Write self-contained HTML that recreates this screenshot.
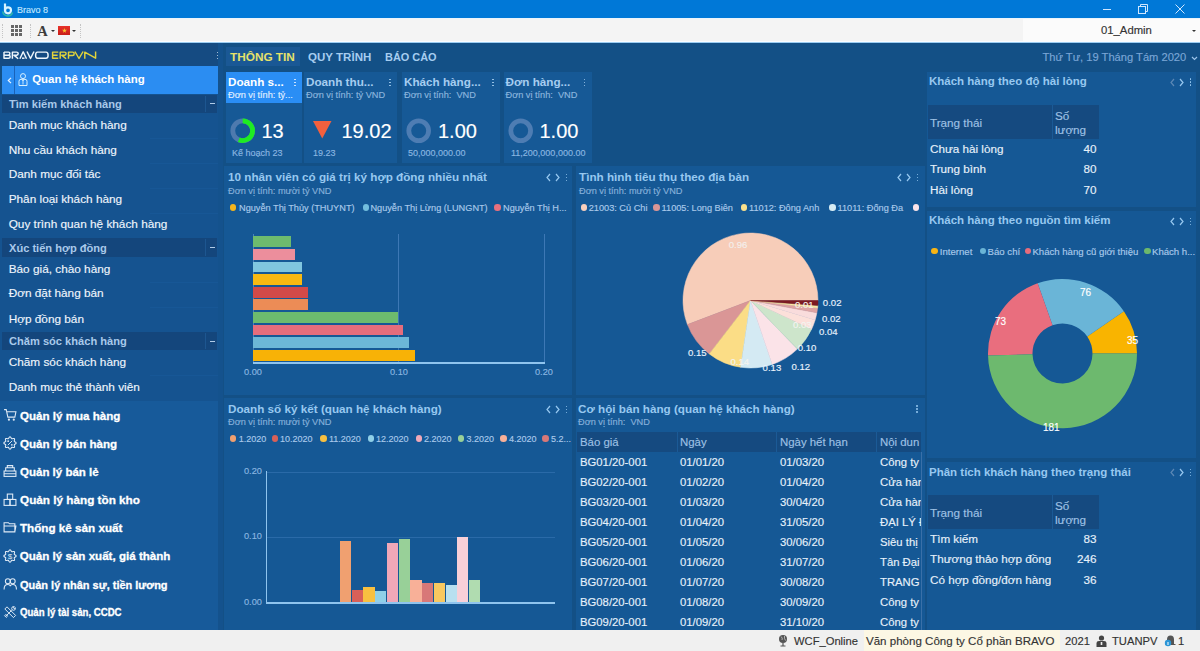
<!DOCTYPE html>
<html><head><meta charset="utf-8"><title>Bravo 8</title>
<style>
html,body{margin:0;padding:0;width:1200px;height:651px;overflow:hidden;background:#135086;}
body{position:relative;font-family:"Liberation Sans",sans-serif;}
.t{position:absolute;white-space:nowrap;line-height:1;font-family:"Liberation Sans",sans-serif;-webkit-text-stroke:0.15px currentColor;}
.r{position:absolute;}
svg.r{overflow:visible;}
</style></head><body>
<div class="r" style="left:0px;top:0px;width:1200px;height:17.5px;background:#0078d7;"></div>
<svg class="r" style="left:1px;top:2px" width="13" height="14" viewBox="0 0 13 14"><path d="M1.8 9.5 A5 5 0 0 0 11.5 10.5" fill="none" stroke="#2fb8a8" stroke-width="1.6"/><circle cx="7" cy="8.3" r="3" fill="none" stroke="#d8f4ff" stroke-width="2.2"/><path d="M4 1.5 V8.5" stroke="#d8f4ff" stroke-width="2.2"/></svg>
<div class="t" style="left:17.0px;top:4.7px;font-size:9.8px;color:#c0e6ff;font-weight:normal;transform-origin:0 0;transform:scaleX(0.918);">Bravo 8</div>
<div class="r" style="left:1102.5px;top:8.5px;width:8.5px;height:1px;background:#cfe6ff;"></div>
<svg class="r" style="left:1138px;top:4px" width="10" height="10" viewBox="0 0 10 10"><rect x="0.5" y="2.5" width="7" height="7" fill="none" stroke="#cfe6ff" stroke-width="1"/><path d="M2.5 2.5 V0.5 H9.5 V7.5 H7.5" fill="none" stroke="#cfe6ff" stroke-width="1"/></svg>
<svg class="r" style="left:1175px;top:4px" width="10" height="10" viewBox="0 0 10 10"><path d="M0.5 0.5 L9.5 9.5 M9.5 0.5 L0.5 9.5" stroke="#cfe6ff" stroke-width="1"/></svg>
<div class="r" style="left:0px;top:17.5px;width:1200px;height:25px;background:#f4f4f4;"></div>
<div class="r" style="left:0px;top:17.5px;width:1200px;height:1px;background:#eaf4fc;"></div>
<div class="r" style="left:2px;top:24px;width:0;height:14px;border-left:1px dotted #c4c4c4"></div>
<div class="r" style="left:30px;top:24px;width:0;height:14px;border-left:1px dotted #c4c4c4"></div>
<div class="r" style="left:80px;top:24px;width:0;height:14px;border-left:1px dotted #c4c4c4"></div>
<div class="r" style="left:11px;top:25px;width:3px;height:3px;background:#666666;"></div>
<div class="r" style="left:15px;top:25px;width:3px;height:3px;background:#666666;"></div>
<div class="r" style="left:19px;top:25px;width:3px;height:3px;background:#666666;"></div>
<div class="r" style="left:11px;top:29px;width:3px;height:3px;background:#666666;"></div>
<div class="r" style="left:15px;top:29px;width:3px;height:3px;background:#666666;"></div>
<div class="r" style="left:19px;top:29px;width:3px;height:3px;background:#666666;"></div>
<div class="r" style="left:11px;top:33px;width:3px;height:3px;background:#666666;"></div>
<div class="r" style="left:15px;top:33px;width:3px;height:3px;background:#666666;"></div>
<div class="r" style="left:19px;top:33px;width:3px;height:3px;background:#666666;"></div>
<div class="t" style="left:37.3px;top:23.7px;font-size:14.5px;color:#3c3c3c;font-weight:bold;-webkit-text-stroke:0;font-family:'Liberation Serif',serif;">A</div>
<div class="r" style="left:50.5px;top:29.8px;width:0;height:0;border-left:2px solid transparent;border-right:2px solid transparent;border-top:2.5px solid #333"></div>
<div class="r" style="left:58px;top:26px;width:12px;height:9px;background:linear-gradient(#e8322a,#c81e18);"></div>
<svg class="r" style="left:61.5px;top:27.5px" width="5" height="5" viewBox="0 0 10 10"><polygon points="5,0 6.2,3.6 10,3.6 6.9,5.9 8.1,9.5 5,7.3 1.9,9.5 3.1,5.9 0,3.6 3.8,3.6" fill="#f8c030"/></svg>
<div class="r" style="left:71.6px;top:29.8px;width:0;height:0;border-left:2px solid transparent;border-right:2px solid transparent;border-top:2.5px solid #333"></div>
<div class="r" style="left:1023px;top:18.5px;width:177px;height:23px;background:#fbfbfb;"></div>
<div class="t" style="left:1101.0px;top:25.4px;font-size:11.3px;color:#333333;font-weight:normal;">01_Admin</div>
<div class="r" style="left:1192px;top:30px;width:0;height:0;border-left:2px solid transparent;border-right:2px solid transparent;border-top:2.5px solid #333"></div>
<div class="r" style="left:0px;top:41px;width:1200px;height:1px;background:#fafcff;"></div>
<div class="r" style="left:0px;top:42px;width:1200px;height:1.2px;background:#9ccdf2;"></div>
<div class="r" style="left:0px;top:43px;width:1200px;height:587px;background:#135086;"></div>
<div class="r" style="left:0px;top:43px;width:218px;height:23px;background:#154b82;"></div>
<div class="r" style="left:0px;top:94px;width:218px;height:307px;background:#155390;"></div>
<div class="r" style="left:0px;top:401px;width:218px;height:229px;background:#175a9a;"></div>
<svg class="r" style="left:0;top:0" width="100" height="70" viewBox="0 0 100 70"><path d="M4.0 52.1 H8.6 Q9.899999999999999 52.1 9.899999999999999 53.6 Q9.899999999999999 55.150000000000006 8.399999999999999 55.150000000000006 H4.0 M8.399999999999999 55.150000000000006 Q10.2 55.150000000000006 10.2 56.650000000000006 Q10.2 58.2 8.6 58.2 H4.0 V52.1" fill="none" stroke="#eef6fc" stroke-width="1.45" stroke-linejoin="round"/><path d="M12.4 58.800000000000004 V52.1 H16.599999999999998 Q18.2 52.1 18.2 53.6 Q18.2 55.150000000000006 16.599999999999998 55.150000000000006 H13.9 L18.2 58.800000000000004" fill="none" stroke="#eef6fc" stroke-width="1.45" stroke-linejoin="round"/><path d="M19.9 58.800000000000004 L23.2 51.800000000000004 L26.5 58.800000000000004" fill="none" stroke="#eef6fc" stroke-width="1.45" stroke-linejoin="round"/><path d="M22.0 58.2 H24.5" fill="none" stroke="#eef6fc" stroke-width="1.45" stroke-linejoin="round"/><path d="M27.0 51.5 L30.5 58.5 L34.0 51.5" fill="none" stroke="#eef6fc" stroke-width="1.45" stroke-linejoin="round"/><path d="M37.5 52.1 H46.0 Q48.1 52.1 48.1 55.150000000000006 Q48.1 58.2 46.0 58.2 H37.5 Q35.6 58.2 35.6 55.150000000000006 Q35.6 52.1 37.5 52.1 Z" fill="none" stroke="#eef6fc" stroke-width="1.45" stroke-linejoin="round"/><path d="M58.3 52.1 H52.6 V58.2 H58.3 M52.6 55.150000000000006 H57.6" fill="none" stroke="#e2d43a" stroke-width="1.45" stroke-linejoin="round"/><path d="M60.2 58.800000000000004 V52.1 H64.5 Q66.1 52.1 66.1 53.6 Q66.1 55.150000000000006 64.5 55.150000000000006 H61.7 L66.1 58.800000000000004" fill="none" stroke="#e2d43a" stroke-width="1.45" stroke-linejoin="round"/><path d="M68.5 58.800000000000004 V52.1 H72.60000000000001 Q74.2 52.1 74.2 53.7 Q74.2 55.550000000000004 72.60000000000001 55.550000000000004 H68.5" fill="none" stroke="#e2d43a" stroke-width="1.45" stroke-linejoin="round"/><path d="M74.9 51.5 L79.0 58.5 L83.1 51.5" fill="none" stroke="#e2d43a" stroke-width="1.45" stroke-linejoin="round"/><path d="M84.8 58.800000000000004 V52.1 L95.6 58.2 V51.5" fill="none" stroke="#e2d43a" stroke-width="1.45" stroke-linejoin="round"/></svg>
<div class="r" style="left:216.65px;top:51.8px;width:1.7px;height:1.7px;background:#cfe0f0;border-radius:1px"></div>
<div class="r" style="left:216.65px;top:54.8px;width:1.7px;height:1.7px;background:#cfe0f0;border-radius:1px"></div>
<div class="r" style="left:216.65px;top:57.8px;width:1.7px;height:1.7px;background:#cfe0f0;border-radius:1px"></div>
<div class="r" style="left:2px;top:66px;width:216px;height:28px;background:#2b8df2;"></div>
<div class="r" style="left:14px;top:66px;width:1px;height:28px;background:#1a62b8;"></div>
<svg class="r" style="left:6.5px;top:76.5px" width="6" height="7" viewBox="0 0 6 7"><path d="M4 0.8 L1.3 3.5 L4 6.2" fill="none" stroke="#e8f4ff" stroke-width="1.2"/></svg>
<svg class="r" style="left:17.5px;top:73px" width="10" height="13" viewBox="0 0 10 13"><circle cx="5" cy="3.1" r="2.5" fill="none" stroke="#d8f0ff" stroke-width="1"/><path d="M1 12.5 V8.2 Q1 6.3 3 6.3 H7 Q9 6.3 9 8.2 V12.5 Z" fill="none" stroke="#d8f0ff" stroke-width="1"/><path d="M4 6.5 L5 8 L6 6.5 M5 8 V11.5" fill="none" stroke="#d8f0ff" stroke-width="0.9"/></svg>
<div class="t" style="left:32.2px;top:74.3px;font-size:11.45px;color:#ffffff;font-weight:bold;-webkit-text-stroke:0;">Quan hệ khách hàng</div>
<div class="r" style="left:2px;top:94.5px;width:215px;height:18.0px;background:#14467c;"></div>
<div class="r" style="left:205px;top:95.5px;width:1px;height:16.0px;background:#1d5690;"></div>
<div class="r" style="left:210px;top:103.0px;width:4.5px;height:1.2px;background:#b0cce8;"></div>
<div class="t" style="left:9.0px;top:98.6px;font-size:11.1px;color:#a9c9ea;font-weight:bold;-webkit-text-stroke:0;">Tìm kiếm khách hàng</div>
<div class="t" style="left:8.7px;top:119.6px;font-size:11.8px;color:#eef5fc;font-weight:normal;">Danh mục khách hàng</div>
<div class="t" style="left:8.7px;top:144.5px;font-size:11.8px;color:#eef5fc;font-weight:normal;">Nhu cầu khách hàng</div>
<div class="t" style="left:8.7px;top:169.4px;font-size:11.8px;color:#eef5fc;font-weight:normal;">Danh mục đối tác</div>
<div class="t" style="left:8.7px;top:194.3px;font-size:11.8px;color:#eef5fc;font-weight:normal;">Phân loại khách hàng</div>
<div class="t" style="left:8.7px;top:219.0px;font-size:11.8px;color:#eef5fc;font-weight:normal;">Quy trình quan hệ khách hàng</div>
<div class="r" style="left:2px;top:238.2px;width:215px;height:18.5px;background:#14467c;"></div>
<div class="r" style="left:205px;top:239.2px;width:1px;height:16.5px;background:#1d5690;"></div>
<div class="r" style="left:210px;top:246.95px;width:4.5px;height:1.2px;background:#b0cce8;"></div>
<div class="t" style="left:9.0px;top:242.6px;font-size:11.1px;color:#a9c9ea;font-weight:bold;-webkit-text-stroke:0;">Xúc tiến hợp đồng</div>
<div class="t" style="left:8.7px;top:263.6px;font-size:11.8px;color:#eef5fc;font-weight:normal;">Báo giá, chào hàng</div>
<div class="t" style="left:8.7px;top:288.0px;font-size:11.8px;color:#eef5fc;font-weight:normal;">Đơn đặt hàng bán</div>
<div class="t" style="left:8.7px;top:313.5px;font-size:11.8px;color:#eef5fc;font-weight:normal;">Hợp đồng bán</div>
<div class="r" style="left:2px;top:332.3px;width:215px;height:17.69999999999999px;background:#14467c;"></div>
<div class="r" style="left:205px;top:333.3px;width:1px;height:15.699999999999989px;background:#1d5690;"></div>
<div class="r" style="left:210px;top:340.65px;width:4.5px;height:1.2px;background:#b0cce8;"></div>
<div class="t" style="left:9.0px;top:336.2px;font-size:11.1px;color:#a9c9ea;font-weight:bold;-webkit-text-stroke:0;">Chăm sóc khách hàng</div>
<div class="t" style="left:8.7px;top:356.6px;font-size:11.8px;color:#eef5fc;font-weight:normal;">Chăm sóc khách hàng</div>
<div class="t" style="left:8.7px;top:381.7px;font-size:11.8px;color:#eef5fc;font-weight:normal;">Danh mục thẻ thành viên</div>
<div class="r" style="left:150px;top:137.5px;width:68px;height:1px;background:#175796;"></div>
<div class="r" style="left:150px;top:162.5px;width:68px;height:1px;background:#175796;"></div>
<div class="r" style="left:150px;top:187.5px;width:68px;height:1px;background:#175796;"></div>
<div class="r" style="left:150px;top:212.5px;width:68px;height:1px;background:#175796;"></div>
<div class="r" style="left:150px;top:281.5px;width:68px;height:1px;background:#175796;"></div>
<div class="r" style="left:150px;top:306.5px;width:68px;height:1px;background:#175796;"></div>
<div class="r" style="left:150px;top:374.5px;width:68px;height:1px;background:#175796;"></div>
<div class="t" style="left:19.7px;top:409.6px;font-size:11.6px;color:#ffffff;font-weight:bold;-webkit-text-stroke:0;-webkit-text-stroke:0.3px #ffffff;transform-origin:0 0;transform:scaleX(0.999);">Quản lý mua hàng</div>
<div class="t" style="left:19.7px;top:437.6px;font-size:11.6px;color:#ffffff;font-weight:bold;-webkit-text-stroke:0;-webkit-text-stroke:0.3px #ffffff;transform-origin:0 0;transform:scaleX(0.999);">Quản lý bán hàng</div>
<div class="t" style="left:19.7px;top:465.9px;font-size:11.6px;color:#ffffff;font-weight:bold;-webkit-text-stroke:0;-webkit-text-stroke:0.3px #ffffff;transform-origin:0 0;transform:scaleX(0.993);">Quản lý bán lẻ</div>
<div class="t" style="left:19.7px;top:494.2px;font-size:11.6px;color:#ffffff;font-weight:bold;-webkit-text-stroke:0;-webkit-text-stroke:0.3px #ffffff;transform-origin:0 0;transform:scaleX(1.012);">Quản lý hàng tồn kho</div>
<div class="t" style="left:19.7px;top:521.8px;font-size:11.6px;color:#ffffff;font-weight:bold;-webkit-text-stroke:0;-webkit-text-stroke:0.3px #ffffff;transform-origin:0 0;transform:scaleX(1.006);">Thống kê sản xuất</div>
<div class="t" style="left:19.7px;top:550.2px;font-size:11.6px;color:#ffffff;font-weight:bold;-webkit-text-stroke:0;-webkit-text-stroke:0.3px #ffffff;transform-origin:0 0;transform:scaleX(1.000);">Quản lý sản xuất, giá thành</div>
<div class="t" style="left:19.7px;top:578.9px;font-size:11.6px;color:#ffffff;font-weight:bold;-webkit-text-stroke:0;-webkit-text-stroke:0.3px #ffffff;transform-origin:0 0;transform:scaleX(0.947);">Quản lý nhân sự, tiền lương</div>
<div class="t" style="left:19.7px;top:607.7px;font-size:10.2px;color:#ffffff;font-weight:bold;-webkit-text-stroke:0;-webkit-text-stroke:0.3px #ffffff;transform-origin:0 0;transform:scaleX(0.944);">Quản lý tài sản, CCDC</div>
<svg class="r" style="left:3px;top:407.9px" width="14" height="14" viewBox="-0.5 -0.5 13 13"><path d="M0.5 1 H2.5 L4 8 H10.5 L11.5 3 H3" fill="none" stroke="#dfeaf6" stroke-width="1"/><circle cx="5" cy="10.3" r="1" fill="#dfeaf6"/><circle cx="9.5" cy="10.3" r="1" fill="#dfeaf6"/></svg>
<svg class="r" style="left:3px;top:435.9px" width="14" height="14" viewBox="-0.5 -0.5 13 13"><path d="M11.70 6.00 L11.59 6.37 L11.30 6.70 L10.90 6.98 L10.49 7.20 L10.16 7.41 L9.97 7.65 L9.94 7.94 L10.03 8.32 L10.16 8.78 L10.24 9.26 L10.21 9.70 L10.03 10.03 L9.70 10.21 L9.26 10.24 L8.78 10.16 L8.33 10.03 L7.94 9.94 L7.65 9.97 L7.41 10.16 L7.20 10.49 L6.98 10.90 L6.70 11.30 L6.37 11.59 L6.00 11.70 L5.63 11.59 L5.30 11.30 L5.02 10.90 L4.80 10.49 L4.59 10.16 L4.35 9.97 L4.06 9.94 L3.68 10.03 L3.22 10.16 L2.74 10.24 L2.30 10.21 L1.97 10.03 L1.79 9.70 L1.76 9.26 L1.84 8.78 L1.97 8.32 L2.06 7.94 L2.03 7.65 L1.84 7.41 L1.51 7.20 L1.10 6.98 L0.70 6.70 L0.41 6.37 L0.30 6.00 L0.41 5.63 L0.70 5.30 L1.10 5.02 L1.51 4.80 L1.84 4.59 L2.03 4.35 L2.06 4.06 L1.97 3.68 L1.84 3.22 L1.76 2.74 L1.79 2.30 L1.97 1.97 L2.30 1.79 L2.74 1.76 L3.22 1.84 L3.67 1.97 L4.06 2.06 L4.35 2.03 L4.59 1.84 L4.80 1.51 L5.02 1.10 L5.30 0.70 L5.63 0.41 L6.00 0.30 L6.37 0.41 L6.70 0.70 L6.98 1.10 L7.20 1.51 L7.41 1.84 L7.65 2.03 L7.94 2.06 L8.33 1.97 L8.78 1.84 L9.26 1.76 L9.70 1.79 L10.03 1.97 L10.21 2.30 L10.24 2.74 L10.16 3.22 L10.03 3.67 L9.94 4.06 L9.97 4.35 L10.16 4.59 L10.49 4.80 L10.90 5.02 L11.30 5.30 L11.59 5.63 L11.70 6.00 Z" fill="none" stroke="#dfeaf6" stroke-width="1"/><path d="M4 8 L8 4" stroke="#dfeaf6" stroke-width="0.9"/><circle cx="4.3" cy="4.3" r="0.8" fill="#dfeaf6"/><circle cx="7.7" cy="7.7" r="0.8" fill="#dfeaf6"/></svg>
<svg class="r" style="left:3px;top:464.2px" width="14" height="14" viewBox="-0.5 -0.5 13 13"><rect x="0.5" y="6" width="11" height="5" fill="none" stroke="#dfeaf6" stroke-width="1"/><path d="M2 6 V3 H10 V6 M3.5 3 V1 H8.5 V3 M0.5 8.5 H11.5" fill="none" stroke="#dfeaf6" stroke-width="1"/></svg>
<svg class="r" style="left:3px;top:492.5px" width="14" height="14" viewBox="-0.5 -0.5 13 13"><rect x="3.5" y="0.5" width="5" height="5" fill="none" stroke="#dfeaf6" stroke-width="1"/><rect x="0.5" y="5.5" width="5.5" height="5.5" fill="none" stroke="#dfeaf6" stroke-width="1"/><rect x="6" y="5.5" width="5.5" height="5.5" fill="none" stroke="#dfeaf6" stroke-width="1"/></svg>
<svg class="r" style="left:3px;top:520.1px" width="14" height="14" viewBox="-0.5 -0.5 13 13"><path d="M0.5 2 H4.5 L5.5 3 H10.5 V10.5 H0.5 Z M0.5 5 H11.5 L10.5 10.5" fill="none" stroke="#dfeaf6" stroke-width="1"/></svg>
<svg class="r" style="left:3px;top:548.5px" width="14" height="14" viewBox="-0.5 -0.5 13 13"><path d="M11.70 6.00 L11.59 6.37 L11.30 6.70 L10.90 6.98 L10.49 7.20 L10.16 7.41 L9.97 7.65 L9.94 7.94 L10.03 8.32 L10.16 8.78 L10.24 9.26 L10.21 9.70 L10.03 10.03 L9.70 10.21 L9.26 10.24 L8.78 10.16 L8.33 10.03 L7.94 9.94 L7.65 9.97 L7.41 10.16 L7.20 10.49 L6.98 10.90 L6.70 11.30 L6.37 11.59 L6.00 11.70 L5.63 11.59 L5.30 11.30 L5.02 10.90 L4.80 10.49 L4.59 10.16 L4.35 9.97 L4.06 9.94 L3.68 10.03 L3.22 10.16 L2.74 10.24 L2.30 10.21 L1.97 10.03 L1.79 9.70 L1.76 9.26 L1.84 8.78 L1.97 8.32 L2.06 7.94 L2.03 7.65 L1.84 7.41 L1.51 7.20 L1.10 6.98 L0.70 6.70 L0.41 6.37 L0.30 6.00 L0.41 5.63 L0.70 5.30 L1.10 5.02 L1.51 4.80 L1.84 4.59 L2.03 4.35 L2.06 4.06 L1.97 3.68 L1.84 3.22 L1.76 2.74 L1.79 2.30 L1.97 1.97 L2.30 1.79 L2.74 1.76 L3.22 1.84 L3.67 1.97 L4.06 2.06 L4.35 2.03 L4.59 1.84 L4.80 1.51 L5.02 1.10 L5.30 0.70 L5.63 0.41 L6.00 0.30 L6.37 0.41 L6.70 0.70 L6.98 1.10 L7.20 1.51 L7.41 1.84 L7.65 2.03 L7.94 2.06 L8.33 1.97 L8.78 1.84 L9.26 1.76 L9.70 1.79 L10.03 1.97 L10.21 2.30 L10.24 2.74 L10.16 3.22 L10.03 3.67 L9.94 4.06 L9.97 4.35 L10.16 4.59 L10.49 4.80 L10.90 5.02 L11.30 5.30 L11.59 5.63 L11.70 6.00 Z" fill="none" stroke="#dfeaf6" stroke-width="1"/><text x="6" y="8.6" font-size="7.5" text-anchor="middle" fill="#dfeaf6" font-family="Liberation Sans">$</text></svg>
<svg class="r" style="left:3px;top:577.2px" width="14" height="14" viewBox="-0.5 -0.5 13 13"><circle cx="4" cy="3.5" r="2.3" fill="none" stroke="#dfeaf6" stroke-width="1"/><circle cx="8.5" cy="3.5" r="2.3" fill="none" stroke="#dfeaf6" stroke-width="1"/><path d="M0.5 11 Q0.5 6.5 4 6.5 Q6 6.5 6.3 8 Q6.5 6.5 8.5 6.5 Q12 6.5 12 11" fill="none" stroke="#dfeaf6" stroke-width="1"/></svg>
<svg class="r" style="left:3px;top:604.8px" width="14" height="14" viewBox="-0.5 -0.5 13 13"><path d="M1.2 3.2 L3.2 1.2 L11.2 9.2 L9.2 11.2 Z" fill="none" stroke="#dfeaf6" stroke-width="0.9"/><path d="M2 10 L7.5 4.5 M8.2 1.2 Q7 3 8 4 Q9 5 10.8 3.8 L11 2 L9.8 2.9 L9.1 2.2 L10 1 Z M1 9.5 L2.5 11 L3.8 9.8 L2.2 8.2 Z" fill="none" stroke="#dfeaf6" stroke-width="0.9"/></svg>
<div class="r" style="left:218px;top:43px;width:5px;height:587px;background:#14528d;"></div>
<div class="r" style="left:226px;top:47px;width:74px;height:19px;background:#1a5895;"></div>
<div class="t" style="left:230.0px;top:52.0px;font-size:11.8px;color:#e6e26a;font-weight:bold;-webkit-text-stroke:0;">THÔNG TIN</div>
<div class="t" style="left:308.0px;top:52.0px;font-size:11.8px;color:#a6cdf0;font-weight:bold;-webkit-text-stroke:0;transform-origin:0 0;transform:scaleX(0.979);">QUY TRÌNH</div>
<div class="t" style="left:385.0px;top:52.0px;font-size:11.8px;color:#a6cdf0;font-weight:bold;-webkit-text-stroke:0;transform-origin:0 0;transform:scaleX(0.926);">BÁO CÁO</div>
<div class="t" style="left:1042.5px;top:52.3px;font-size:11.15px;color:#7aa6d6;font-weight:normal;">Thứ Tư, 19 Tháng Tám 2020</div>
<svg class="r" style="left:1191px;top:56px" width="7" height="5" viewBox="0 0 7 5"><path d="M1 1 L3.5 3.5 L6 1" fill="none" stroke="#9cc4ea" stroke-width="1.2"/></svg>
<div class="r" style="left:226px;top:72px;width:76px;height:91px;background:#165996;"></div>
<div class="r" style="left:304px;top:72px;width:93px;height:91px;background:#165996;"></div>
<div class="r" style="left:402px;top:72px;width:98px;height:91px;background:#165996;"></div>
<div class="r" style="left:503.5px;top:72px;width:88.0px;height:91px;background:#165996;"></div>
<div class="r" style="left:226px;top:72px;width:76px;height:31px;background:#2a8ef5;"></div>
<div class="t" style="left:228.0px;top:75.9px;font-size:11.7px;color:#ffffff;font-weight:bold;-webkit-text-stroke:0;">Doanh s...</div>
<div class="t" style="left:228.0px;top:91.4px;font-size:9.2px;color:#e0f0ff;font-weight:normal;">Đơn vị tính: tỷ...</div>
<div class="r" style="left:294.15px;top:78.5px;width:1.7px;height:1.7px;background:#e0f0ff;border-radius:1px"></div>
<div class="r" style="left:294.15px;top:81.5px;width:1.7px;height:1.7px;background:#e0f0ff;border-radius:1px"></div>
<div class="r" style="left:294.15px;top:84.5px;width:1.7px;height:1.7px;background:#e0f0ff;border-radius:1px"></div>
<div class="t" style="left:306.0px;top:75.9px;font-size:11.7px;color:#a6cdf0;font-weight:bold;-webkit-text-stroke:0;">Doanh thu...</div>
<div class="t" style="left:306.0px;top:91.4px;font-size:9.2px;color:#8cb6de;font-weight:normal;">Đơn vị tính: tỷ VND</div>
<div class="r" style="left:389.15px;top:78.5px;width:1.7px;height:1.7px;background:#a6cdf0;border-radius:1px"></div>
<div class="r" style="left:389.15px;top:81.5px;width:1.7px;height:1.7px;background:#a6cdf0;border-radius:1px"></div>
<div class="r" style="left:389.15px;top:84.5px;width:1.7px;height:1.7px;background:#a6cdf0;border-radius:1px"></div>
<div class="t" style="left:404.0px;top:75.9px;font-size:11.7px;color:#a6cdf0;font-weight:bold;-webkit-text-stroke:0;">Khách hàng...</div>
<div class="t" style="left:404.0px;top:91.4px;font-size:9.2px;color:#8cb6de;font-weight:normal;">Đơn vị tính:&nbsp; VND</div>
<div class="r" style="left:492.15px;top:78.5px;width:1.7px;height:1.7px;background:#a6cdf0;border-radius:1px"></div>
<div class="r" style="left:492.15px;top:81.5px;width:1.7px;height:1.7px;background:#a6cdf0;border-radius:1px"></div>
<div class="r" style="left:492.15px;top:84.5px;width:1.7px;height:1.7px;background:#a6cdf0;border-radius:1px"></div>
<div class="t" style="left:505.5px;top:75.9px;font-size:11.7px;color:#a6cdf0;font-weight:bold;-webkit-text-stroke:0;">Đơn hàng...</div>
<div class="t" style="left:505.5px;top:91.4px;font-size:9.2px;color:#8cb6de;font-weight:normal;">Đơn vị tính:&nbsp; VND</div>
<div class="r" style="left:583.65px;top:78.5px;width:1.7px;height:1.7px;background:#a6cdf0;border-radius:1px"></div>
<div class="r" style="left:583.65px;top:81.5px;width:1.7px;height:1.7px;background:#a6cdf0;border-radius:1px"></div>
<div class="r" style="left:583.65px;top:84.5px;width:1.7px;height:1.7px;background:#a6cdf0;border-radius:1px"></div>
<svg class="r" style="left:227.6px;top:115.89999999999999px" width="29.4" height="29.4" viewBox="-14.7 -14.7 29.4 29.4"><circle cx="0" cy="0" r="9.9" fill="none" stroke="#4e7aae" stroke-width="4.8"/><path d="M0 -9.9 A9.9 9.9 0 1 1 -3.94 9.08" fill="none" stroke="#1eec22" stroke-width="4.8"/></svg>
<div class="t" style="left:261.5px;top:120.6px;font-size:20px;color:#ffffff;font-weight:normal;">13</div>
<div class="t" style="left:232.0px;top:149.4px;font-size:9.0px;color:#8ab6e0;font-weight:normal;">Kế hoạch 23</div>
<svg class="r" style="left:313px;top:121px" width="19" height="18" viewBox="0 0 19 18"><polygon points="0,0 18.5,0 9.25,17.5" fill="#f2603e"/></svg>
<div class="t" style="left:341.5px;top:120.6px;font-size:20px;color:#ffffff;font-weight:normal;">19.02</div>
<div class="t" style="left:313.0px;top:149.4px;font-size:9.0px;color:#8ab6e0;font-weight:normal;">19.23</div>
<svg class="r" style="left:403.90000000000003px;top:116.10000000000001px" width="29.4" height="29.4" viewBox="-14.7 -14.7 29.4 29.4"><circle cx="0" cy="0" r="9.9" fill="none" stroke="#4e7db3" stroke-width="4.8"/></svg>
<div class="t" style="left:438.0px;top:120.6px;font-size:20px;color:#ffffff;font-weight:normal;">1.00</div>
<div class="t" style="left:408.0px;top:149.4px;font-size:9.0px;color:#8ab6e0;font-weight:normal;">50,000,000.00</div>
<svg class="r" style="left:505.90000000000003px;top:116.10000000000001px" width="29.4" height="29.4" viewBox="-14.7 -14.7 29.4 29.4"><circle cx="0" cy="0" r="9.9" fill="none" stroke="#4e7db3" stroke-width="4.8"/></svg>
<div class="t" style="left:539.5px;top:120.6px;font-size:20px;color:#ffffff;font-weight:normal;">1.00</div>
<div class="t" style="left:511.0px;top:149.4px;font-size:9.0px;color:#8ab6e0;font-weight:normal;">11,200,000,000.00</div>
<div class="r" style="left:224px;top:166px;width:347.5px;height:228.5px;background:#155895;"></div>
<div class="r" style="left:575.5px;top:166px;width:349.0px;height:228.5px;background:#155895;"></div>
<div class="r" style="left:224px;top:398px;width:347.5px;height:232px;background:#155895;"></div>
<div class="r" style="left:575.5px;top:398px;width:349.0px;height:232px;background:#155895;"></div>
<div class="r" style="left:927px;top:72px;width:269px;height:135px;background:#155895;"></div>
<div class="r" style="left:927px;top:211px;width:269px;height:247px;background:#155895;"></div>
<div class="r" style="left:927px;top:462px;width:269px;height:168px;background:#155895;"></div>
<div class="t" style="left:228.0px;top:170.8px;font-size:11.7px;color:#97c8f0;font-weight:bold;-webkit-text-stroke:0;">10 nhân viên có giá trị ký hợp đồng nhiều nhất</div>
<div class="t" style="left:228.0px;top:187.2px;font-size:9.2px;color:#86b0da;font-weight:normal;">Đơn vị tính: mười tỷ VND</div>
<svg class="r" style="left:546px;top:173px" width="24" height="9" viewBox="0 0 24 9"><path d="M4 1 L1 4.5 L4 8" fill="none" stroke="#97c8f0" stroke-width="1.2"/><path d="M10 1 L13 4.5 L10 8" fill="none" stroke="#97c8f0" stroke-width="1.2"/></svg>
<div class="r" style="left:565.65px;top:173.5px;width:1.7px;height:1.7px;background:#97c8f0;border-radius:1px"></div>
<div class="r" style="left:565.65px;top:176.5px;width:1.7px;height:1.7px;background:#97c8f0;border-radius:1px"></div>
<div class="r" style="left:565.65px;top:179.5px;width:1.7px;height:1.7px;background:#97c8f0;border-radius:1px"></div>
<div class="r" style="left:229.7px;top:204.2px;width:6.6px;height:6.6px;border-radius:50%;background:#f5b51c"></div>
<div class="t" style="left:239.0px;top:203.6px;font-size:9.2px;color:#a9c9ea;font-weight:normal;">Nguyễn Thị Thủy (THUYNT)</div>
<div class="r" style="left:362.7px;top:204.2px;width:6.6px;height:6.6px;border-radius:50%;background:#72bede"></div>
<div class="t" style="left:370.4px;top:203.6px;font-size:9.2px;color:#a9c9ea;font-weight:normal;">Nguyễn Thị Lừng (LUNGNT)</div>
<div class="r" style="left:494.2px;top:204.2px;width:6.6px;height:6.6px;border-radius:50%;background:#e8707e"></div>
<div class="t" style="left:503.0px;top:203.6px;font-size:9.2px;color:#a9c9ea;font-weight:normal;">Nguyễn Thị H...</div>
<div class="r" style="left:252.5px;top:234px;width:1px;height:129px;background:#4a82bc;"></div>
<div class="r" style="left:398px;top:234px;width:1.2px;height:129px;background:#3d78b5;"></div>
<div class="r" style="left:543.8px;top:234px;width:1.2px;height:129px;background:#3d78b5;"></div>
<div class="r" style="left:253px;top:236.2px;width:38.2px;height:10.8px;background:#6dbb6e;"></div>
<div class="r" style="left:253px;top:248.8px;width:41.8px;height:10.8px;background:#ec8e9c;"></div>
<div class="r" style="left:253px;top:261.5px;width:48.9px;height:10.8px;background:#80c6df;"></div>
<div class="r" style="left:253px;top:274.1px;width:49px;height:10.8px;background:#f8b912;"></div>
<div class="r" style="left:253px;top:286.8px;width:54.9px;height:10.8px;background:#d24a48;"></div>
<div class="r" style="left:253px;top:299.4px;width:54.9px;height:10.8px;background:#ec8c56;"></div>
<div class="r" style="left:253px;top:312.0px;width:145.3px;height:10.8px;background:#6dbb6e;"></div>
<div class="r" style="left:253px;top:324.7px;width:150px;height:10.8px;background:#e56d7c;"></div>
<div class="r" style="left:253px;top:337.3px;width:155.6px;height:10.8px;background:#6cb7d7;"></div>
<div class="r" style="left:253px;top:350.0px;width:161.5px;height:10.8px;background:#f8b206;"></div>
<div class="r" style="left:252.5px;top:362px;width:292px;height:1.6px;background:#8fc4ee;"></div>
<div class="t" style="left:244.0px;top:367.7px;font-size:9.2px;color:#8ab6e0;font-weight:normal;">0.00</div>
<div class="t" style="left:390.0px;top:367.7px;font-size:9.2px;color:#8ab6e0;font-weight:normal;">0.10</div>
<div class="t" style="left:535.0px;top:367.7px;font-size:9.2px;color:#8ab6e0;font-weight:normal;">0.20</div>
<div class="t" style="left:579.0px;top:170.8px;font-size:11.7px;color:#97c8f0;font-weight:bold;-webkit-text-stroke:0;">Tình hình tiêu thụ theo địa bàn</div>
<div class="t" style="left:579.0px;top:187.2px;font-size:9.2px;color:#86b0da;font-weight:normal;">Đơn vị tính: mười tỷ VND</div>
<svg class="r" style="left:897px;top:173px" width="24" height="9" viewBox="0 0 24 9"><path d="M4 1 L1 4.5 L4 8" fill="none" stroke="#97c8f0" stroke-width="1.2"/><path d="M10 1 L13 4.5 L10 8" fill="none" stroke="#97c8f0" stroke-width="1.2"/></svg>
<div class="r" style="left:916.65px;top:173.5px;width:1.7px;height:1.7px;background:#97c8f0;border-radius:1px"></div>
<div class="r" style="left:916.65px;top:176.5px;width:1.7px;height:1.7px;background:#97c8f0;border-radius:1px"></div>
<div class="r" style="left:916.65px;top:179.5px;width:1.7px;height:1.7px;background:#97c8f0;border-radius:1px"></div>
<div class="r" style="left:580.7px;top:204.2px;width:6.6px;height:6.6px;border-radius:50%;background:#f7cfbd"></div>
<div class="t" style="left:588.7px;top:203.6px;font-size:9.2px;color:#a9c9ea;font-weight:normal;">21003: Củ Chi</div>
<div class="r" style="left:653.4000000000001px;top:204.2px;width:6.6px;height:6.6px;border-radius:50%;background:#d99596"></div>
<div class="t" style="left:661.6px;top:203.6px;font-size:9.2px;color:#a9c9ea;font-weight:normal;">11005: Long Biên</div>
<div class="r" style="left:740.7px;top:204.2px;width:6.6px;height:6.6px;border-radius:50%;background:#fbe18c"></div>
<div class="t" style="left:749.0px;top:203.6px;font-size:9.2px;color:#a9c9ea;font-weight:normal;">11012: Đông Anh</div>
<div class="r" style="left:829.4000000000001px;top:204.2px;width:6.6px;height:6.6px;border-radius:50%;background:#d6ecf4"></div>
<div class="t" style="left:837.5px;top:203.6px;font-size:9.2px;color:#a9c9ea;font-weight:normal;">11011: Đống Đa</div>
<div class="r" style="left:912.7px;top:204.2px;width:6.6px;height:6.6px;border-radius:50%;background:#fbe4ea"></div>
<div class="t" style="left:921.0px;top:203.6px;font-size:9.2px;color:#a9c9ea;font-weight:normal;"></div>
<svg class="r" style="left:682.0px;top:232.2px" width="137.0" height="137.0" viewBox="-68.5 -68.5 137.0 137.0"><path d="M0 0 L67.50 -0.00 A67.5 67.5 0 1 0 -63.05 24.11 Z" fill="#f7cdb9" stroke="#f7cdb9" stroke-width="0.5"/><path d="M0 0 L-63.05 24.11 A67.5 67.5 0 0 0 -41.25 53.43 Z" fill="#da9696" stroke="#da9696" stroke-width="0.5"/><path d="M0 0 L-41.25 53.43 A67.5 67.5 0 0 0 -9.83 66.78 Z" fill="#fbdd86" stroke="#fbdd86" stroke-width="0.5"/><path d="M0 0 L-9.83 66.78 A67.5 67.5 0 0 0 21.79 63.88 Z" fill="#d4eaf3" stroke="#d4eaf3" stroke-width="0.5"/><path d="M0 0 L21.79 63.88 A67.5 67.5 0 0 0 46.85 48.59 Z" fill="#fbe3e8" stroke="#fbe3e8" stroke-width="0.5"/><path d="M0 0 L46.85 48.59 A67.5 67.5 0 0 0 61.12 28.65 Z" fill="#cde5cb" stroke="#cde5cb" stroke-width="0.5"/><path d="M0 0 L61.12 28.65 A67.5 67.5 0 0 0 64.64 19.45 Z" fill="#fce0da" stroke="#fce0da" stroke-width="0.5"/><path d="M0 0 L64.64 19.45 A67.5 67.5 0 0 0 66.38 12.26 Z" fill="#f9dcdc" stroke="#f9dcdc" stroke-width="0.5"/><path d="M0 0 L66.38 12.26 A67.5 67.5 0 0 0 67.10 7.38 Z" fill="#dea3a3" stroke="#dea3a3" stroke-width="0.5"/><path d="M0 0 L67.10 7.38 A67.5 67.5 0 0 0 67.32 4.93 Z" fill="#fbe8a6" stroke="#fbe8a6" stroke-width="0.5"/><path d="M0 0 L67.32 4.93 A67.5 67.5 0 0 0 67.50 0.00 Z" fill="#7d1a22" stroke="#7d1a22" stroke-width="0.5"/></svg>
<div class="t" style="left:728.7px;top:239.7px;font-size:9.6px;color:#f4efec;font-weight:normal;">0.96</div>
<div class="t" style="left:822.8px;top:297.7px;font-size:9.6px;color:#e8f2fc;font-weight:normal;">0.02</div>
<div class="t" style="left:795.0px;top:299.5px;font-size:9.6px;color:#f4f0e8;font-weight:normal;">0.01</div>
<div class="t" style="left:822.0px;top:314.3px;font-size:9.6px;color:#e8f2fc;font-weight:normal;">0.02</div>
<div class="t" style="left:793.0px;top:319.9px;font-size:9.6px;color:#f4f4f0;font-weight:normal;">0.03</div>
<div class="t" style="left:819.0px;top:326.9px;font-size:9.6px;color:#e8f2fc;font-weight:normal;">0.04</div>
<div class="t" style="left:797.7px;top:342.7px;font-size:9.6px;color:#e8f2fc;font-weight:normal;">0.10</div>
<div class="t" style="left:791.4px;top:361.5px;font-size:9.6px;color:#e8f2fc;font-weight:normal;">0.12</div>
<div class="t" style="left:762.6px;top:362.9px;font-size:9.6px;color:#e8f2fc;font-weight:normal;">0.13</div>
<div class="t" style="left:730.5px;top:356.9px;font-size:9.6px;color:#f4f4f0;font-weight:normal;">0.14</div>
<div class="t" style="left:688.0px;top:347.5px;font-size:9.6px;color:#e8f2fc;font-weight:normal;">0.15</div>
<div class="t" style="left:228.0px;top:403.1px;font-size:11.7px;color:#97c8f0;font-weight:bold;-webkit-text-stroke:0;">Doanh số ký kết (quan hệ khách hàng)</div>
<div class="t" style="left:228.0px;top:417.9px;font-size:9.2px;color:#86b0da;font-weight:normal;">Đơn vị tính: mười tỷ VND</div>
<svg class="r" style="left:546px;top:405px" width="24" height="9" viewBox="0 0 24 9"><path d="M4 1 L1 4.5 L4 8" fill="none" stroke="#97c8f0" stroke-width="1.2"/><path d="M10 1 L13 4.5 L10 8" fill="none" stroke="#97c8f0" stroke-width="1.2"/></svg>
<div class="r" style="left:565.65px;top:405.5px;width:1.7px;height:1.7px;background:#97c8f0;border-radius:1px"></div>
<div class="r" style="left:565.65px;top:408.5px;width:1.7px;height:1.7px;background:#97c8f0;border-radius:1px"></div>
<div class="r" style="left:565.65px;top:411.5px;width:1.7px;height:1.7px;background:#97c8f0;border-radius:1px"></div>
<div class="r" style="left:229.7px;top:435.4px;width:6.6px;height:6.6px;border-radius:50%;background:#f0a070"></div>
<div class="t" style="left:238.7px;top:435.0px;font-size:9.0px;color:#a9c9ea;font-weight:normal;">1.2020</div>
<div class="r" style="left:271.7px;top:435.4px;width:6.6px;height:6.6px;border-radius:50%;background:#d86058"></div>
<div class="t" style="left:280.0px;top:435.0px;font-size:9.0px;color:#a9c9ea;font-weight:normal;">10.2020</div>
<div class="r" style="left:320.2px;top:435.4px;width:6.6px;height:6.6px;border-radius:50%;background:#f8c040"></div>
<div class="t" style="left:329.0px;top:435.0px;font-size:9.0px;color:#a9c9ea;font-weight:normal;">11.2020</div>
<div class="r" style="left:367.5px;top:435.4px;width:6.6px;height:6.6px;border-radius:50%;background:#90d0e8"></div>
<div class="t" style="left:376.0px;top:435.0px;font-size:9.0px;color:#a9c9ea;font-weight:normal;">12.2020</div>
<div class="r" style="left:415.5px;top:435.4px;width:6.6px;height:6.6px;border-radius:50%;background:#f0a8b8"></div>
<div class="t" style="left:424.0px;top:435.0px;font-size:9.0px;color:#a9c9ea;font-weight:normal;">2.2020</div>
<div class="r" style="left:457.7px;top:435.4px;width:6.6px;height:6.6px;border-radius:50%;background:#98d098"></div>
<div class="t" style="left:466.5px;top:435.0px;font-size:9.0px;color:#a9c9ea;font-weight:normal;">3.2020</div>
<div class="r" style="left:500.2px;top:435.4px;width:6.6px;height:6.6px;border-radius:50%;background:#f8b098"></div>
<div class="t" style="left:509.0px;top:435.0px;font-size:9.0px;color:#a9c9ea;font-weight:normal;">4.2020</div>
<div class="r" style="left:542.3000000000001px;top:435.4px;width:6.6px;height:6.6px;border-radius:50%;background:#d87878"></div>
<div class="t" style="left:551.0px;top:435.0px;font-size:9.0px;color:#a9c9ea;font-weight:normal;">5.2...</div>
<div class="r" style="left:266.5px;top:471.5px;width:288px;height:1px;background:#2a6aa8;"></div>
<div class="r" style="left:266.5px;top:536.5px;width:288px;height:1px;background:#2a6aa8;"></div>
<div class="r" style="left:265.8px;top:470.6px;width:1.6px;height:133px;background:#8fc4ee;"></div>
<div class="r" style="left:265.8px;top:602px;width:289px;height:1.6px;background:#8fc4ee;"></div>
<div class="r" style="left:340.0px;top:541.4px;width:11.3px;height:60.6px;background:#f0a070;"></div>
<div class="r" style="left:351.7px;top:590px;width:11.3px;height:12px;background:#d86058;"></div>
<div class="r" style="left:363.4px;top:586.7px;width:11.3px;height:15.3px;background:#f8c040;"></div>
<div class="r" style="left:375.2px;top:591px;width:11.3px;height:11px;background:#90d0e8;"></div>
<div class="r" style="left:386.9px;top:543.4px;width:11.3px;height:58.6px;background:#f0a8b8;"></div>
<div class="r" style="left:398.6px;top:538.9px;width:11.3px;height:63.1px;background:#98d098;"></div>
<div class="r" style="left:410.3px;top:580.2px;width:11.3px;height:21.8px;background:#f8b098;"></div>
<div class="r" style="left:422.0px;top:582.8px;width:11.3px;height:19.2px;background:#d87878;"></div>
<div class="r" style="left:433.8px;top:582.8px;width:11.3px;height:19.2px;background:#f8c860;"></div>
<div class="r" style="left:445.5px;top:585.3px;width:11.3px;height:16.7px;background:#b8e0f0;"></div>
<div class="r" style="left:457.2px;top:536.9px;width:11.3px;height:65.1px;background:#f8d0d8;"></div>
<div class="r" style="left:468.9px;top:580.2px;width:11.3px;height:21.8px;background:#b0dcb0;"></div>
<div class="t" style="left:244.0px;top:467.2px;font-size:9.2px;color:#8ab6e0;font-weight:normal;">0.20</div>
<div class="t" style="left:244.0px;top:532.2px;font-size:9.2px;color:#8ab6e0;font-weight:normal;">0.10</div>
<div class="t" style="left:244.0px;top:598.2px;font-size:9.2px;color:#8ab6e0;font-weight:normal;">0.00</div>
<div class="t" style="left:578.0px;top:402.8px;font-size:11.7px;color:#97c8f0;font-weight:bold;-webkit-text-stroke:0;">Cơ hội bán hàng (quan hệ khách hàng)</div>
<div class="t" style="left:578.0px;top:417.7px;font-size:9.2px;color:#86b0da;font-weight:normal;">Đơn vị tính:&nbsp; VND</div>
<div class="r" style="left:916.15px;top:405.0px;width:1.7px;height:1.7px;background:#97c8f0;border-radius:1px"></div>
<div class="r" style="left:916.15px;top:408.0px;width:1.7px;height:1.7px;background:#97c8f0;border-radius:1px"></div>
<div class="r" style="left:916.15px;top:411.0px;width:1.7px;height:1.7px;background:#97c8f0;border-radius:1px"></div>
<div class="r" style="left:577px;top:432px;width:344px;height:198px;overflow:hidden">
<div class="r" style="left:0px;top:0px;width:344px;height:19.5px;background:#154a80;"></div>
<div class="r" style="left:99.5px;top:0px;width:1px;height:19.5px;background:#1b5a96;"></div>
<div class="r" style="left:199px;top:0px;width:1px;height:19.5px;background:#1b5a96;"></div>
<div class="r" style="left:299px;top:0px;width:1px;height:19.5px;background:#1b5a96;"></div>
<div class="t" style="left:3px;top:4.6px;font-size:11.4px;color:#9fc1e4">Báo giá</div>
<div class="t" style="left:103px;top:4.6px;font-size:11.4px;color:#9fc1e4">Ngày</div>
<div class="t" style="left:203px;top:4.6px;font-size:11.4px;color:#9fc1e4">Ngày hết hạn</div>
<div class="t" style="left:303px;top:4.6px;font-size:11.4px;color:#9fc1e4">Nội dun</div>
<div class="t" style="left:3px;top:25.1px;font-size:11.3px;color:#e6f0fa">BG01/20-001</div>
<div class="t" style="left:103px;top:25.1px;font-size:11.3px;color:#e6f0fa">01/01/20</div>
<div class="t" style="left:203px;top:25.1px;font-size:11.3px;color:#e6f0fa">01/03/20</div>
<div class="t" style="left:303px;top:25.1px;font-size:11.3px;color:#e6f0fa">Công ty</div>
<div class="t" style="left:3px;top:45.1px;font-size:11.3px;color:#e6f0fa">BG02/20-001</div>
<div class="t" style="left:103px;top:45.1px;font-size:11.3px;color:#e6f0fa">01/02/20</div>
<div class="t" style="left:203px;top:45.1px;font-size:11.3px;color:#e6f0fa">01/04/20</div>
<div class="t" style="left:303px;top:45.1px;font-size:11.3px;color:#e6f0fa">Cửa hàng</div>
<div class="t" style="left:3px;top:65.1px;font-size:11.3px;color:#e6f0fa">BG03/20-001</div>
<div class="t" style="left:103px;top:65.1px;font-size:11.3px;color:#e6f0fa">01/03/20</div>
<div class="t" style="left:203px;top:65.1px;font-size:11.3px;color:#e6f0fa">30/04/20</div>
<div class="t" style="left:303px;top:65.1px;font-size:11.3px;color:#e6f0fa">Cửa hàng</div>
<div class="t" style="left:3px;top:85.1px;font-size:11.3px;color:#e6f0fa">BG04/20-001</div>
<div class="t" style="left:103px;top:85.1px;font-size:11.3px;color:#e6f0fa">01/04/20</div>
<div class="t" style="left:203px;top:85.1px;font-size:11.3px;color:#e6f0fa">31/05/20</div>
<div class="t" style="left:303px;top:85.1px;font-size:11.3px;color:#e6f0fa">ĐẠI LÝ Đ</div>
<div class="t" style="left:3px;top:105.1px;font-size:11.3px;color:#e6f0fa">BG05/20-001</div>
<div class="t" style="left:103px;top:105.1px;font-size:11.3px;color:#e6f0fa">01/05/20</div>
<div class="t" style="left:203px;top:105.1px;font-size:11.3px;color:#e6f0fa">30/06/20</div>
<div class="t" style="left:303px;top:105.1px;font-size:11.3px;color:#e6f0fa">Siêu thị</div>
<div class="t" style="left:3px;top:125.1px;font-size:11.3px;color:#e6f0fa">BG06/20-001</div>
<div class="t" style="left:103px;top:125.1px;font-size:11.3px;color:#e6f0fa">01/06/20</div>
<div class="t" style="left:203px;top:125.1px;font-size:11.3px;color:#e6f0fa">31/07/20</div>
<div class="t" style="left:303px;top:125.1px;font-size:11.3px;color:#e6f0fa">Tân Đại</div>
<div class="t" style="left:3px;top:145.1px;font-size:11.3px;color:#e6f0fa">BG07/20-001</div>
<div class="t" style="left:103px;top:145.1px;font-size:11.3px;color:#e6f0fa">01/07/20</div>
<div class="t" style="left:203px;top:145.1px;font-size:11.3px;color:#e6f0fa">30/08/20</div>
<div class="t" style="left:303px;top:145.1px;font-size:11.3px;color:#e6f0fa">TRANG T</div>
<div class="t" style="left:3px;top:165.1px;font-size:11.3px;color:#e6f0fa">BG08/20-001</div>
<div class="t" style="left:103px;top:165.1px;font-size:11.3px;color:#e6f0fa">01/08/20</div>
<div class="t" style="left:203px;top:165.1px;font-size:11.3px;color:#e6f0fa">30/09/20</div>
<div class="t" style="left:303px;top:165.1px;font-size:11.3px;color:#e6f0fa">Công ty</div>
<div class="t" style="left:3px;top:185.1px;font-size:11.3px;color:#e6f0fa">BG09/20-001</div>
<div class="t" style="left:103px;top:185.1px;font-size:11.3px;color:#e6f0fa">01/09/20</div>
<div class="t" style="left:203px;top:185.1px;font-size:11.3px;color:#e6f0fa">31/10/20</div>
<div class="t" style="left:303px;top:185.1px;font-size:11.3px;color:#e6f0fa">Công ty</div>
</div>
<div class="r" style="left:921px;top:452px;width:1.2px;height:178px;background:#3a70a8;"></div>
<div class="t" style="left:929.0px;top:76.3px;font-size:11.5px;color:#97c8f0;font-weight:bold;-webkit-text-stroke:0;">Khách hàng theo độ hài lòng</div>
<svg class="r" style="left:1170px;top:77.5px" width="24" height="9" viewBox="0 0 24 9"><path d="M4 1 L1 4.5 L4 8" fill="none" stroke="#5d88b5" stroke-width="1.2"/><path d="M10 1 L13 4.5 L10 8" fill="none" stroke="#97c8f0" stroke-width="1.2"/></svg>
<div class="r" style="left:1189.65px;top:78.0px;width:1.7px;height:1.7px;background:#97c8f0;border-radius:1px"></div>
<div class="r" style="left:1189.65px;top:81.0px;width:1.7px;height:1.7px;background:#97c8f0;border-radius:1px"></div>
<div class="r" style="left:1189.65px;top:84.0px;width:1.7px;height:1.7px;background:#97c8f0;border-radius:1px"></div>
<div class="r" style="left:928px;top:105px;width:170.5px;height:33.5px;background:#154a80;"></div>
<div class="r" style="left:1052px;top:105px;width:1px;height:33.5px;background:#1b5a96;"></div>
<div class="t" style="left:930.0px;top:116.6px;font-size:11.7px;color:#9fc1e4;font-weight:normal;">Trạng thái</div>
<div class="t" style="left:1055.0px;top:109.6px;font-size:11.7px;color:#9fc1e4;font-weight:normal;">Số</div>
<div class="t" style="left:1055.0px;top:124.1px;font-size:11.7px;color:#9fc1e4;font-weight:normal;">lượng</div>
<div class="t" style="left:930px;top:143.1px;font-size:11.7px;color:#e6f0fa;width:121px;overflow:hidden;padding-bottom:4px">Chưa hài lòng</div>
<div class="t" style="right:103.5px;top:143.1px;font-size:11.7px;color:#e6f0fa;font-weight:normal;">40</div>
<div class="t" style="left:930px;top:163.3px;font-size:11.7px;color:#e6f0fa;width:121px;overflow:hidden;padding-bottom:4px">Trung bình</div>
<div class="t" style="right:103.5px;top:163.3px;font-size:11.7px;color:#e6f0fa;font-weight:normal;">80</div>
<div class="t" style="left:930px;top:183.5px;font-size:11.7px;color:#e6f0fa;width:121px;overflow:hidden;padding-bottom:4px">Hài lòng</div>
<div class="t" style="right:103.5px;top:183.5px;font-size:11.7px;color:#e6f0fa;font-weight:normal;">70</div>
<div class="t" style="left:929.0px;top:215.3px;font-size:11.5px;color:#97c8f0;font-weight:bold;-webkit-text-stroke:0;">Khách hàng theo nguồn tìm kiếm</div>
<svg class="r" style="left:1170px;top:217px" width="24" height="9" viewBox="0 0 24 9"><path d="M4 1 L1 4.5 L4 8" fill="none" stroke="#97c8f0" stroke-width="1.2"/><path d="M10 1 L13 4.5 L10 8" fill="none" stroke="#97c8f0" stroke-width="1.2"/></svg>
<div class="r" style="left:1189.65px;top:217.5px;width:1.7px;height:1.7px;background:#97c8f0;border-radius:1px"></div>
<div class="r" style="left:1189.65px;top:220.5px;width:1.7px;height:1.7px;background:#97c8f0;border-radius:1px"></div>
<div class="r" style="left:1189.65px;top:223.5px;width:1.7px;height:1.7px;background:#97c8f0;border-radius:1px"></div>
<div class="r" style="left:931.2px;top:247.6px;width:6.6px;height:6.6px;border-radius:50%;background:#f8b414"></div>
<div class="t" style="left:939.8px;top:246.7px;font-size:9.6px;color:#a9c9ea;font-weight:normal;">Internet</div>
<div class="r" style="left:979.5px;top:247.6px;width:6.6px;height:6.6px;border-radius:50%;background:#6ab4d6"></div>
<div class="t" style="left:987.6px;top:246.7px;font-size:9.6px;color:#a9c9ea;font-weight:normal;">Báo chí</div>
<div class="r" style="left:1024.7px;top:247.6px;width:6.6px;height:6.6px;border-radius:50%;background:#e86c7c"></div>
<div class="t" style="left:1032.4px;top:246.7px;font-size:9.6px;color:#a9c9ea;font-weight:normal;">Khách hàng cũ giới thiệu</div>
<div class="r" style="left:1144.2px;top:247.6px;width:6.6px;height:6.6px;border-radius:50%;background:#6cb86c"></div>
<div class="t" style="left:1152.0px;top:246.7px;font-size:9.6px;color:#a9c9ea;font-weight:normal;">Khách h...</div>
<svg class="r" style="left:988.2px;top:279.0px" width="149.0" height="149.0" viewBox="-74.5 -74.5 149.0 149.0"><path d="M30.00 -0.00 L74.50 -0.00 A74.5 74.5 0 0 0 61.38 -42.22 L24.72 -17.00 A30 30 0 0 1 30.00 -0.00 Z" fill="#f9b400"/><path d="M24.72 -17.00 L61.38 -42.22 A74.5 74.5 0 0 0 -24.84 -70.24 L-10.00 -28.28 A30 30 0 0 1 24.72 -17.00 Z" fill="#6ab5d7"/><path d="M-10.00 -28.28 L-24.84 -70.24 A74.5 74.5 0 0 0 -74.48 1.92 L-29.99 0.77 A30 30 0 0 1 -10.00 -28.28 Z" fill="#e96e7e"/><path d="M-29.99 0.77 L-74.48 1.92 A74.5 74.5 0 0 0 74.50 0.00 L30.00 0.00 A30 30 0 0 1 -29.99 0.77 Z" fill="#6db96e"/></svg>
<div class="t" style="left:1080.0px;top:288.0px;font-size:10px;color:#ffffff;font-weight:normal;">76</div>
<div class="t" style="left:995.0px;top:317.0px;font-size:10px;color:#ffffff;font-weight:normal;">73</div>
<div class="t" style="left:1127.0px;top:336.0px;font-size:10px;color:#ffffff;font-weight:normal;">35</div>
<div class="t" style="left:1043.0px;top:423.0px;font-size:10px;color:#ffffff;font-weight:normal;">181</div>
<div class="t" style="left:929.0px;top:466.6px;font-size:11.5px;color:#97c8f0;font-weight:bold;-webkit-text-stroke:0;">Phân tích khách hàng theo trạng thái</div>
<svg class="r" style="left:1170px;top:468px" width="24" height="9" viewBox="0 0 24 9"><path d="M4 1 L1 4.5 L4 8" fill="none" stroke="#5d88b5" stroke-width="1.2"/><path d="M10 1 L13 4.5 L10 8" fill="none" stroke="#97c8f0" stroke-width="1.2"/></svg>
<div class="r" style="left:1189.65px;top:468.5px;width:1.7px;height:1.7px;background:#97c8f0;border-radius:1px"></div>
<div class="r" style="left:1189.65px;top:471.5px;width:1.7px;height:1.7px;background:#97c8f0;border-radius:1px"></div>
<div class="r" style="left:1189.65px;top:474.5px;width:1.7px;height:1.7px;background:#97c8f0;border-radius:1px"></div>
<div class="r" style="left:928px;top:495px;width:170.5px;height:33.5px;background:#154a80;"></div>
<div class="r" style="left:1052px;top:495px;width:1px;height:33.5px;background:#1b5a96;"></div>
<div class="t" style="left:930.0px;top:506.6px;font-size:11.7px;color:#9fc1e4;font-weight:normal;">Trạng thái</div>
<div class="t" style="left:1055.0px;top:499.6px;font-size:11.7px;color:#9fc1e4;font-weight:normal;">Số</div>
<div class="t" style="left:1055.0px;top:514.1px;font-size:11.7px;color:#9fc1e4;font-weight:normal;">lượng</div>
<div class="t" style="left:930px;top:533.1px;font-size:11.7px;color:#e6f0fa;width:121px;overflow:hidden;padding-bottom:4px">Tìm kiếm</div>
<div class="t" style="right:103.5px;top:533.1px;font-size:11.7px;color:#e6f0fa;font-weight:normal;">83</div>
<div class="t" style="left:930px;top:553.3px;font-size:11.7px;color:#e6f0fa;width:121px;overflow:hidden;padding-bottom:4px">Thương thảo hợp đồng</div>
<div class="t" style="right:103.5px;top:553.3px;font-size:11.7px;color:#e6f0fa;font-weight:normal;">246</div>
<div class="t" style="left:930px;top:573.5px;font-size:11.7px;color:#e6f0fa;width:121px;overflow:hidden;padding-bottom:4px">Có hợp đồng/đơn hàng</div>
<div class="t" style="right:103.5px;top:573.5px;font-size:11.7px;color:#e6f0fa;font-weight:normal;">36</div>
<div class="r" style="left:0px;top:630px;width:1200px;height:21px;background:#f0f0f0;"></div>
<div class="r" style="left:863.5px;top:630px;width:196.5px;height:21px;background:#fcf7e4;"></div>
<svg class="r" style="left:778px;top:634px" width="10" height="13" viewBox="0 0 10 13"><circle cx="5" cy="5" r="4" fill="#555"/><path d="M3 2.5 Q5 4 4 6 M6.5 2 Q6 4.5 7.5 6.5" stroke="#ddd" stroke-width="0.7" fill="none"/><path d="M5 9 V12 M2.5 12 H7.5" stroke="#555" stroke-width="1.2"/></svg>
<div class="t" style="left:794.0px;top:636.1px;font-size:11.2px;color:#333333;font-weight:normal;">WCF_Online</div>
<div class="t" style="left:866.0px;top:635.8px;font-size:11.55px;color:#333333;font-weight:normal;">Văn phòng Công ty Cổ phần BRAVO</div>
<div class="t" style="left:1065.0px;top:636.1px;font-size:11.2px;color:#333333;font-weight:normal;">2021</div>
<svg class="r" style="left:1096px;top:635px" width="11" height="12" viewBox="0 0 11 12"><circle cx="5.5" cy="3" r="2.6" fill="#444"/><path d="M0.5 12 V8 Q0.5 6 3 6 H8 Q10.5 6 10.5 8 V12 Z" fill="#444"/><rect x="4.7" y="7" width="1.6" height="3" fill="#f0f0f0"/></svg>
<div class="t" style="left:1112.0px;top:636.1px;font-size:11.2px;color:#333333;font-weight:normal;">TUANPV</div>
<svg class="r" style="left:1164px;top:634px" width="12" height="13" viewBox="0 0 12 13"><path d="M3 10 V5.5 Q3 1.5 6.5 1.5 Q10 1.5 10 5.5 V10 H11.5 V11 H1.5 V10 Z" fill="#555"/><circle cx="4" cy="9" r="3.2" fill="#2b95d6"/><rect x="3.5" y="8" width="1" height="3" fill="#fff"/></svg>
<div class="t" style="left:1178.0px;top:636.1px;font-size:11.2px;color:#333333;font-weight:normal;">1</div>
</body></html>
